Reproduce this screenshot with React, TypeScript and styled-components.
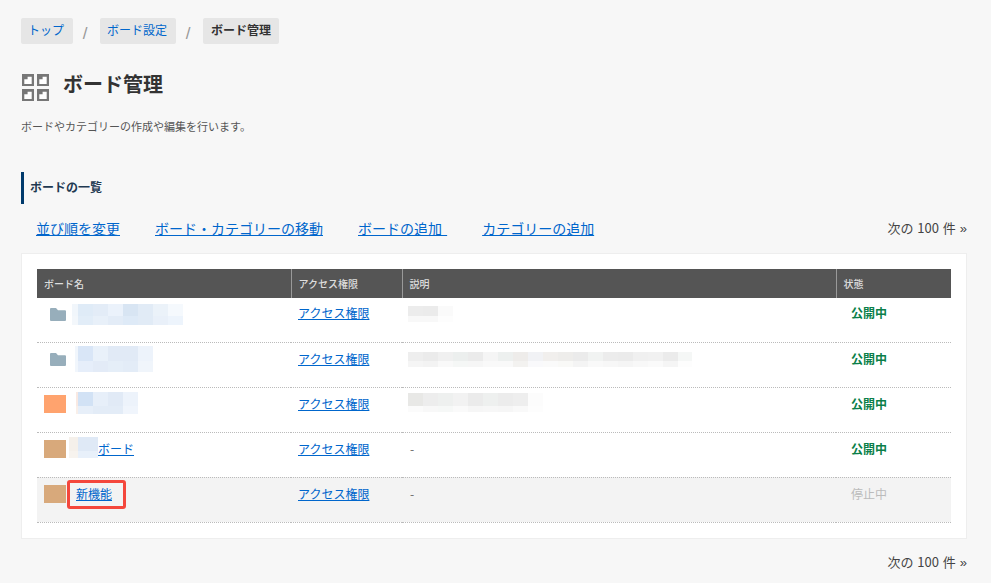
import * as React from 'react';
import styled, { createGlobalStyle } from 'styled-components';

const BLUE = '#0066cc';

type Blur = { x: number[]; h: number[]; rows: string[][] };

const nameBlurs: Record<string, Blur> = {
  a: {
    x: [6, 15, 15, 15, 15, 15, 15, 15],
    h: [12, 9],
    rows: [
      ['#f1f6fb', '#dfebf7', '#e3ecf7', '#ebf2fb', '#d8e5f3', '#e1ebf6', '#ebf2f9', '#f5f9fd'],
      ['#f3f7fb', '#e2edf8', '#e8f0f9', '#e3ecf7', '#deeaf7', '#e1ebf6', '#e9f0f9', '#edf4fc'],
    ],
  },
  b: {
    x: [3, 15, 15, 15, 15, 15],
    h: [15, 11],
    rows: [
      ['#f1f6fc', '#d9e6f7', '#e9f1fa', '#e1eaf6', '#e1eaf6', '#edf3fb'],
      ['#f1f6fc', '#e6eefa', '#e3ebf7', '#e5eef8', '#e3ecf7', '#f0f5fb'],
    ],
  },
  c: {
    x: [2, 15, 15, 15, 15],
    h: [14, 8],
    rows: [
      ['#f9e9e2', '#d2e2f5', '#e7eff9', '#e1eaf6', '#edf3fb'],
      ['#f9efe9', '#e7eff9', '#e3ecf7', '#e3ecf7', '#f0f5fc'],
    ],
  },
  d: {
    x: [9, 20],
    h: [14, 7],
    rows: [
      ['#f5f0ea', '#dfe9f6'],
      ['#f7f3ee', '#e8f0fa'],
    ],
  },
};

const descBlurs: Record<string, Blur> = {
  a: {
    x: [15, 15, 15],
    h: [10, 6],
    rows: [
      ['#ececec', '#ebebeb', '#fafafa'],
      ['#f8f8f8', '#f8f8f8', '#fdfdfd'],
    ],
  },
  b: {
    x: [15, 15, 15, 15, 15, 15, 15, 15, 15, 15, 15, 15, 15, 15, 15, 15, 15, 15, 14],
    h: [9, 6],
    rows: [
      ['#eeeeee', '#ebebeb', '#f0f0f0', '#ecefee', '#ebebeb', '#f5f5f5', '#edf0ef', '#eeecea', '#f1f2f5', '#f1efed', '#eeedeb', '#ebebeb', '#f1f3f2', '#ececec', '#ebebeb', '#f0f0f0', '#f1f1f1', '#ebebeb', '#f5f7f6'],
      ['#f5f5f5', '#f3f3f3', '#f9f9f9', '#f5f7f6', '#f6f6f6', '#f9f9f9', '#f9f9f9', '#f3f2f0', '#f9f9fb', '#fafafa', '#f9f9f7', '#f4f4f4', '#f9f9f9', '#f7f7f7', '#f5f5f5', '#f8f8f8', '#fafafa', '#f5f5f5', '#fdfdfd'],
    ],
  },
  c: {
    x: [15, 15, 15, 15, 15, 15, 15, 15, 15],
    h: [13, 6],
    rows: [
      ['#e8e8e6', '#ededed', '#eef0ef', '#f2f2f2', '#ebebeb', '#eef0ef', '#ececec', '#eeeeee', '#fcfcfc'],
      ['#fbfbfb', '#f8f8f8', '#f6f8f7', '#fafafa', '#f6f6f6', '#f7f7f7', '#f6f6f6', '#f9f9f9', '#fdfdfd'],
    ],
  },
};

const rows = [
  { id: 1, kind: 'folder', folderTop: 4, name: nameBlurs.a, nameX: 6, nameY: 0, desc: descBlurs.a, descY: 2, on: true },
  { id: 2, kind: 'folder', folderTop: 3, name: nameBlurs.b, nameX: 9, nameY: -4, desc: descBlurs.b, descY: 2, on: true },
  { id: 3, kind: '#ffa36e', name: nameBlurs.c, nameX: 10, nameY: -3, desc: descBlurs.c, descY: -2, on: true },
  { id: 4, kind: '#d8a97b', name: nameBlurs.d, nameX: 3, nameY: -3, label: 'ボード', on: true },
  { id: 5, kind: '#d8a97b', label: '新機能', marked: true, on: false },
];

const GroupIcon = () => (
  <PageIcon viewBox="0 0 27 27" width="27" height="27">
    {[
      [0, 0],
      [15, 0],
      [0, 15],
      [15, 15],
    ].map(([x, y]) => (
      <g key={`${x}-${y}`} transform={`translate(${x} ${y})`}>
        <rect width="12" height="12" fill="#777" />
        <path d="M2.3 5.3H5.6V2.7H9.7V10H2.3z" fill="#fff" />
      </g>
    ))}
  </PageIcon>
);

const FolderIcon = () => (
  <svg viewBox="0 0 16 13" width="16" height="13">
    <path
      d="M1 0h5l2 2.2h7a1 1 0 0 1 1 1V12a1 1 0 0 1-1 1H1a1 1 0 0 1-1-1V1a1 1 0 0 1 1-1z"
      fill="#97aebb"
    />
  </svg>
);

const Mosaic = ({ blur, className }: { blur: Blur; className?: string }) => (
  <MosaicGrid className={className} $cols={blur.x} $rows={blur.h}>
    {blur.rows.flat().map((c, i) => (
      <MosaicCell key={i} $c={c} />
    ))}
  </MosaicGrid>
);

const NextLink = () => (
  <Next>
    次の 100 件 <Chevron>»</Chevron>
  </Next>
);

export default function App() {
  return (
    <Page>
      <GlobalStyle />
      <Crumbs>
        <Crumb>
          <a href="#">トップ</a>
        </Crumb>
        <Slash>/</Slash>
        <Crumb>
          <a href="#">ボード設定</a>
        </Crumb>
        <Slash>/</Slash>
        <Crumb>ボード管理</Crumb>
      </Crumbs>

      <TitleRow>
        <GroupIcon />
        <Title>ボード管理</Title>
      </TitleRow>
      <Lead>ボードやカテゴリーの作成や編集を行います。</Lead>

      <SectionHead>ボードの一覧</SectionHead>

      <Toolbar>
        <Actions>
          <a href="#">並び順を変更</a>
          <a href="#">ボード・カテゴリーの移動</a>
          <a href="#">ボードの追加&nbsp;</a>
          <a href="#">カテゴリーの追加</a>
        </Actions>
        <NextLink />
      </Toolbar>

      <Card>
        <Table>
          <colgroup>
            <col width="254" />
            <col width="111" />
            <col width="434" />
            <col width="115" />
          </colgroup>
          <thead>
            <tr>
              <Th>ボード名</Th>
              <Th>アクセス権限</Th>
              <Th>説明</Th>
              <Th>状態</Th>
            </tr>
          </thead>
          <tbody>
            {rows.map((r) => (
              <Row key={r.id} $off={!r.on}>
                <Td>
                  <NameCell>
                    {r.kind === 'folder' ? (
                      <FolderSlot $top={r.folderTop ?? 0}>
                        <FolderIcon />
                      </FolderSlot>
                    ) : (
                      <Swatch $c={r.kind} />
                    )}
                    {r.name && <NameBlur blur={r.name} $x={r.nameX ?? 0} $y={r.nameY ?? 0} />}
                    {r.label && (
                      <NameLink href="#" $marked={r.marked}>
                        {r.label}
                      </NameLink>
                    )}
                  </NameCell>
                </Td>
                <Td>
                  <a href="#">アクセス権限</a>
                </Td>
                <Td>{r.desc ? <DescBlur blur={r.desc} $y={r.descY ?? 0} /> : <Dash>-</Dash>}</Td>
                <Td>
                  <Status $on={r.on}>{r.on ? '公開中' : '停止中'}</Status>
                </Td>
              </Row>
            ))}
          </tbody>
        </Table>
      </Card>

      <Footer>
        <NextLink />
      </Footer>
    </Page>
  );
}

const GlobalStyle = createGlobalStyle`
  html, body {
    margin: 0;
    background: #f7f7f7;
  }
  body {
    font-family: "Noto Sans CJK JP", "Noto Sans", sans-serif;
    font-size: 12px;
    color: #333;
  }
  a {
    color: ${BLUE};
  }
`;

const Page = styled.div`
  width: 991px;
  height: 583px;
  box-sizing: border-box;
  padding: 18px 24px 0 21px;
  overflow: hidden;
`;

const Crumbs = styled.div`
  display: flex;
  align-items: center;
`;

const Crumb = styled.div`
  height: 26px;
  line-height: 24px;
  padding: 0 8px;
  border-radius: 2px;
  background: #e6e6e6;
  font-weight: 700;
  a {
    margin: 0 1px 0 -1px;
    font-weight: 400;
    text-decoration: none;
  }
`;

const Slash = styled.span`
  width: 27px;
  box-sizing: border-box;
  padding: 5px 3px 0 0;
  text-align: center;
  font-family: "Liberation Sans", sans-serif;
  font-size: 17px;
  color: #999;
`;

const TitleRow = styled.div`
  display: flex;
  align-items: center;
  gap: 14px;
  margin-top: 30px;
  padding-left: 1px;
  height: 27px;
`;

const PageIcon = styled.svg`
  display: block;
  flex: none;
`;

const Title = styled.h1`
  margin: -7px 0 0;
  font-size: 20px;
  font-weight: 700;
  line-height: 28px;
  color: #333;
`;

const Lead = styled.p`
  margin: 17px 0 0;
  font-size: 11px;
  line-height: 16px;
  color: #555;
`;

const SectionHead = styled.h2`
  margin: 38px 0 0;
  height: 32px;
  padding-left: 6px;
  border-left: 3px solid #003a6c;
  font-size: 12px;
  font-weight: 700;
  line-height: 29px;
  color: #1f3a52;
`;

const Toolbar = styled.div`
  display: flex;
  justify-content: space-between;
  align-items: center;
  height: 24px;
  margin-top: 12px;
  padding-left: 15px;
`;

const Actions = styled.div`
  display: flex;
  gap: 35px;
  font-size: 14px;
  word-spacing: 2px;
`;

const Next = styled.span`
  padding-bottom: 2px;
  font-size: 13px;
  word-spacing: 1px;
  color: #444;
`;

const Chevron = styled.span`
  font-family: "Liberation Sans", sans-serif;
`;

const Card = styled.div`
  margin-top: 13px;
  box-sizing: border-box;
  width: 946px;
  height: 286px;
  padding: 15px;
  border: 1px solid #eeeeee;
  background: #fff;
`;

const Table = styled.table`
  width: 914px;
  table-layout: fixed;
  border-collapse: collapse;
`;

const Th = styled.th`
  height: 29px;
  padding: 0 0 0 7px;
  background: #555;
  border-left: 1px solid #999;
  font-size: 10px;
  font-weight: 500;
  text-align: left;
  color: #ddd;
  &:first-child {
    border-left: 0;
  }
`;

const Row = styled.tr<{ $off: boolean }>`
  background: ${(p) => (p.$off ? '#f3f3f3' : 'transparent')};
  border-bottom: 1px dotted #bbb;
  &:first-child td {
    height: 44px;
    padding-top: 6px;
  }
`;

const Td = styled.td`
  box-sizing: border-box;
  height: 45px;
  padding: 7px 6px 0;
  vertical-align: top;
  line-height: 17px;
  &:nth-child(2) {
    padding-left: 7px;
  }
`;

const NameCell = styled.div`
  display: flex;
  align-items: flex-start;
  margin-left: 1px;
`;

const FolderSlot = styled.div<{ $top: number }>`
  width: 22px;
  margin-top: ${(p) => p.$top}px;
  padding-left: 6px;
  box-sizing: border-box;
  svg {
    display: block;
  }
`;

const Swatch = styled.div<{ $c: string }>`
  width: 22px;
  height: 18px;
  background: ${(p) => p.$c};
`;

const MosaicGrid = styled.div<{ $cols: number[]; $rows: number[] }>`
  display: grid;
  grid-template-columns: ${(p) => p.$cols.map((n) => `${n}px`).join(' ')};
  grid-template-rows: ${(p) => p.$rows.map((n) => `${n}px`).join(' ')};
  width: max-content;
`;

const MosaicCell = styled.div<{ $c: string }>`
  background: ${(p) => p.$c};
`;

const NameBlur = styled(Mosaic)<{ $x: number; $y: number }>`
  margin-top: ${(p) => p.$y}px;
  margin-left: ${(p) => p.$x}px;
`;

const DescBlur = styled(Mosaic)<{ $y: number }>`
  margin-top: ${(p) => p.$y}px;
`;

const NameLink = styled.a<{ $marked?: boolean }>`
  position: relative;
  margin-left: ${(p) => (p.$marked ? '10px' : '0')};
  ${(p) =>
    p.$marked
      ? `&::after {
    content: '';
    position: absolute;
    left: -9px;
    right: -14px;
    top: -5px;
    bottom: -7px;
    border: 3px solid #f4473c;
    border-radius: 3px;
  }`
      : ''}
`;

const Dash = styled.span`
  padding-left: 2px;
  color: #666;
`;

const Status = styled.span<{ $on: boolean }>`
  display: block;
  margin-left: 9px;
  font-weight: ${(p) => (p.$on ? 700 : 400)};
  color: ${(p) => (p.$on ? '#0b7f49' : '#bbb')};
`;

const Footer = styled.div`
  display: flex;
  justify-content: flex-end;
  margin-top: 13px;
`;
